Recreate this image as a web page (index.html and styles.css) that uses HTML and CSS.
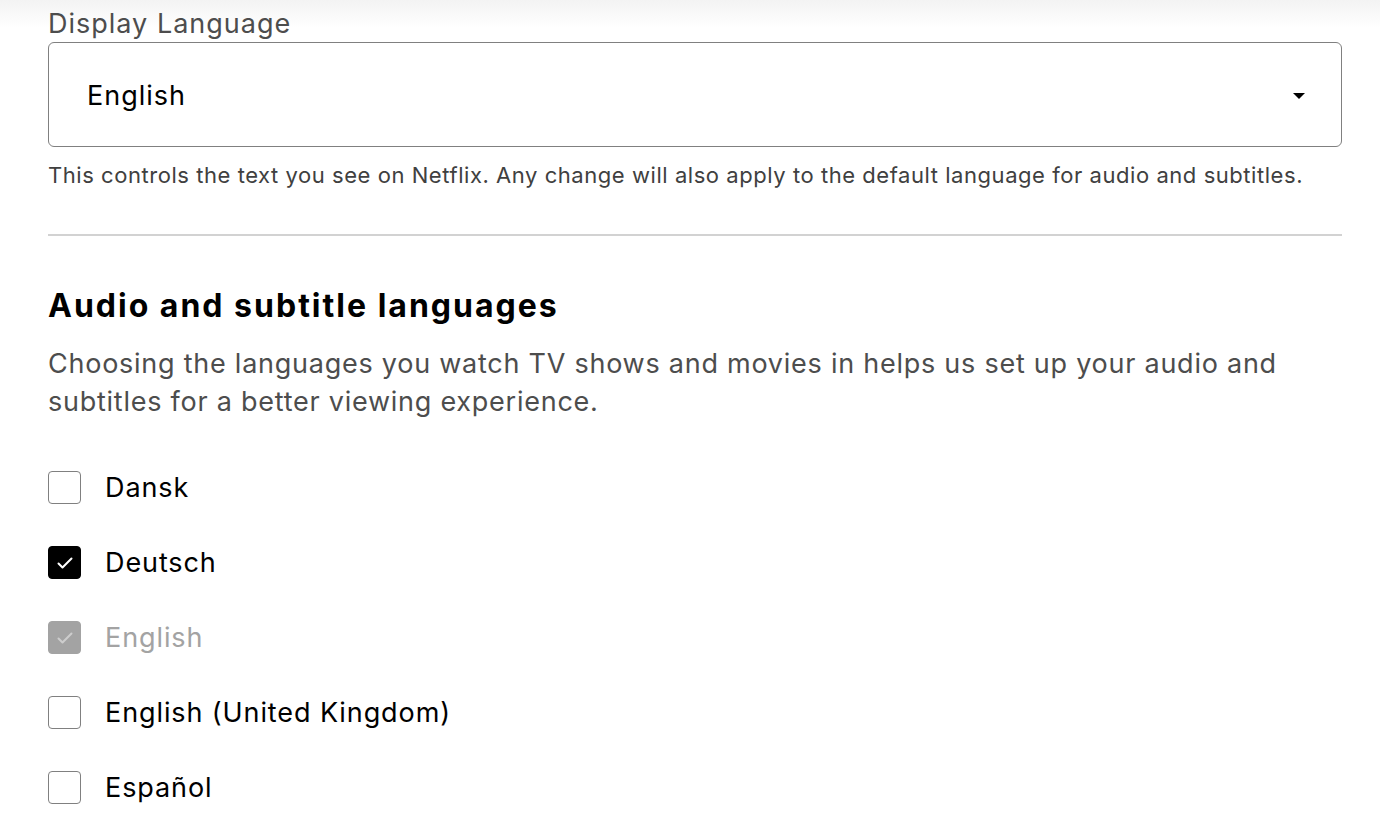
FILE: index.html
```html
<!DOCTYPE html>
<html lang="en">
<head>
<meta charset="utf-8">
<title>Language</title>
<link rel="stylesheet" href="styles.css">
</head>
<body>
<main class="page">
  <section class="display-lang">
    <label class="field-label" for="lang">Display Language</label>
    <div class="select">
      <span class="select-value">English</span>
      <svg class="select-arrow" width="12" height="6" viewBox="0 0 12 6"><path d="M0 0h12L6 6z" fill="#000"/></svg>
    </div>
    <p class="help">This controls the text you see on Netflix. Any change will also apply to the default language for audio and subtitles.</p>
  </section>
  <hr class="divider">
  <section class="audio">
    <h2 class="title">Audio and subtitle languages</h2>
    <p class="desc">Choosing the languages you watch TV shows and movies in helps us set up your audio and subtitles for a better viewing experience.</p>
    <ul class="options">
      <li class="option"><span class="box"></span><span class="opt-label">Dansk</span></li>
      <li class="option"><span class="box checked"><svg width="18" height="18" viewBox="0 0 18 18"><path d="M2.5 9.5l4 4L15.5 4.5" fill="none" stroke="#fff" stroke-width="2" stroke-linecap="round" stroke-linejoin="round"/></svg></span><span class="opt-label">Deutsch</span></li>
      <li class="option disabled"><span class="box checked"><svg width="18" height="18" viewBox="0 0 18 18"><path d="M2.5 9.5l4 4L15.5 4.5" fill="none" stroke="#cdcdcd" stroke-width="2" stroke-linecap="round" stroke-linejoin="round"/></svg></span><span class="opt-label">English</span></li>
      <li class="option"><span class="box"></span><span class="opt-label">English (United Kingdom)</span></li>
      <li class="option"><span class="box"></span><span class="opt-label">Español</span></li>
    </ul>
  </section>
</main>
</body>
</html>
```

FILE: styles.css
```css
html, body {
  margin: 0;
  padding: 0;
}
body {
  background: #fff linear-gradient(#f3f3f3, #ffffff 28px) no-repeat;
  font-family: Inter, "Liberation Sans", Arial, sans-serif;
  color: #000;
}
.page {
  padding: 8px 38px 0 48px;
}
.field-label {
  display: block;
  font-size: 27px;
  letter-spacing: 1px;
  line-height: 32px;
  color: #4d4d4d;
  margin-bottom: 2px;
}
.select {
  height: 105px;
  border: 1px solid #808080;
  border-radius: 6px;
  display: flex;
  align-items: center;
  padding: 2px 36px 0 38px;
  box-sizing: border-box;
}
.select-value {
  flex: 1;
  font-size: 27px;
  letter-spacing: 1px;
  color: #000;
}
.select-arrow {
  display: block;
}
.help {
  margin: 14px 0 0;
  font-size: 22px;
  letter-spacing: 0.55px;
  line-height: 28px;
  color: #404040;
}
.divider {
  border: 0;
  height: 2px;
  background: #d2d2d2;
  margin: 45px 0 0;
}
.title {
  margin: 50px 0 0;
  font-size: 32px;
  letter-spacing: 2px;
  line-height: 40px;
  font-weight: 700;
  color: #000;
}
.desc {
  margin: 19px 0 0;
  font-size: 27px;
  letter-spacing: 0.75px;
  line-height: 38px;
  color: #4d4d4d;
}
.options {
  list-style: none;
  margin: 50px 0 0;
  padding: 0;
}
.option {
  display: flex;
  align-items: center;
  height: 33px;
  margin-bottom: 42px;
}
.box {
  width: 33px;
  height: 33px;
  box-sizing: border-box;
  border: 1px solid #808080;
  border-radius: 4px;
  display: flex;
  align-items: center;
  justify-content: center;
  margin-right: 24px;
  flex: none;
}
.box.checked {
  background: #000;
  border-color: #000;
}
.disabled .box.checked {
  background: #a3a3a3;
  border-color: #a3a3a3;
}
.opt-label {
  font-size: 27px;
  letter-spacing: 0.9px;
  color: #000;
}
.disabled .opt-label {
  color: #a3a3a3;
}
```
